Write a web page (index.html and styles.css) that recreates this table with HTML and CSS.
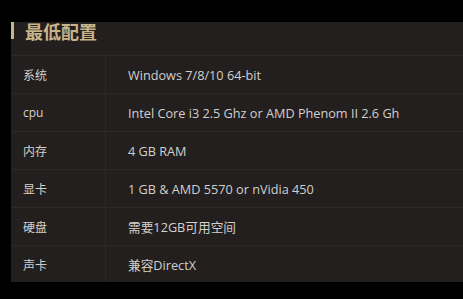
FILE: index.html
```html
<!DOCTYPE html>
<html lang="zh">
<head>
<meta charset="utf-8">
<link rel="stylesheet" href="styles.css">
</head>
<body>
<div class="panel">
  <div class="head"><span class="bar"></span><h2 class="title">最低配置</h2></div>
  <div class="row"><div class="k">系统</div><div class="v">Windows 7/8/10 64-bit</div></div>
  <div class="row"><div class="k">cpu</div><div class="v">Intel Core i3 2.5 Ghz or AMD Phenom II 2.6 Gh</div></div>
  <div class="row"><div class="k">内存</div><div class="v">4 GB RAM</div></div>
  <div class="row"><div class="k">显卡</div><div class="v">1 GB &amp; AMD 5570 or nVidia 450</div></div>
  <div class="row"><div class="k">硬盘</div><div class="v">需要12GB可用空间</div></div>
  <div class="row"><div class="k">声卡</div><div class="v">兼容DirectX</div></div>
</div>
</body>
</html>
```
FILE: styles.css
```css
html, body { margin: 0; padding: 0; background: #000; }
body { padding: 22px 0 0 11px; font-family: "Open Sans", "Noto Sans CJK SC", sans-serif; }
.panel { background: #221f1e; height: 260px; }
.head { height: 33px; display: flex; align-items: flex-start; }
.bar { width: 3px; height: 17px; background: #c9b48a; margin-right: 11px; }
.title { margin: 0; font-family: "Noto Sans CJK SC", sans-serif; font-size: 18px; font-weight: 700; color: #c9b48a; line-height: 18px; }
.row { display: flex; height: 37px; border-top: 1px solid #2c2928; align-items: center; font-size: 12px; color: #d3cfcd; }
.k { width: 95px; height: 100%; display: flex; align-items: center; padding-left: 12px; border-right: 1px solid #2c2928; box-sizing: border-box; }
.v { padding-left: 22px; font-size: 12.7px; }
```
